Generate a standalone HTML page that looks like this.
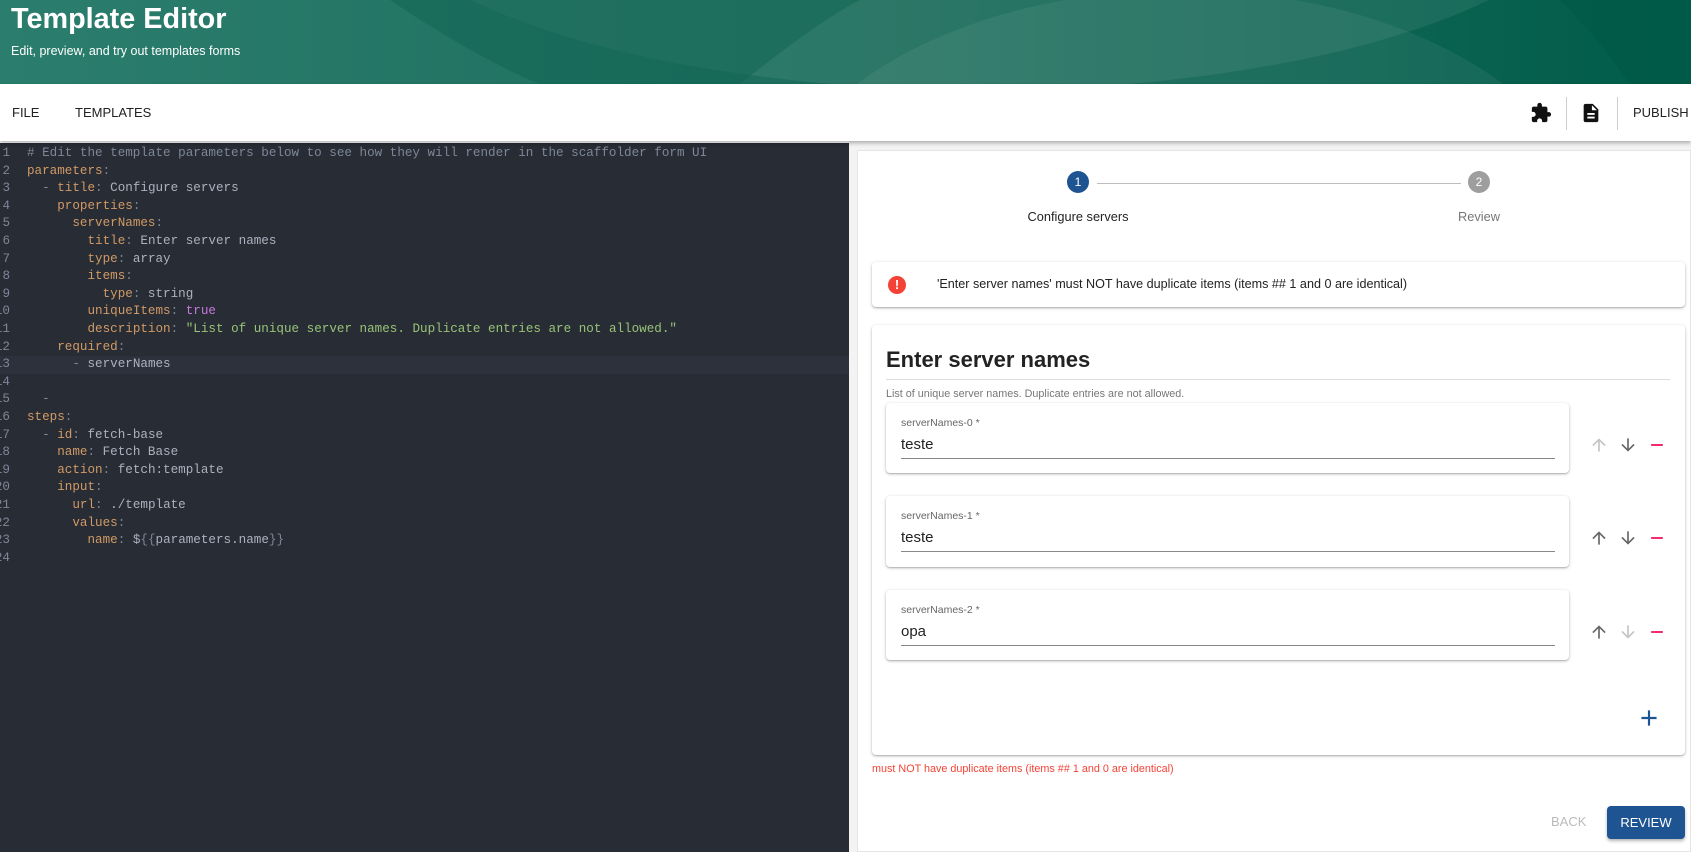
<!DOCTYPE html>
<html><head><meta charset="utf-8"><style>
*{box-sizing:border-box;margin:0;padding:0}
body{width:1691px;height:852px;overflow:hidden;font-family:"Liberation Sans",sans-serif;background:#fff;position:relative}
.hdr{position:absolute;left:0;top:0;width:1691px;height:84px;background:#1f6e5e;overflow:hidden}
.hdr h1{position:absolute;left:11px;top:3px;color:#fff;font-size:28.8px;font-weight:bold}
.hdr p{position:absolute;left:11px;top:44px;color:#fff;font-size:12.5px}
.bar{position:absolute;left:0;top:84px;width:1691px;height:57px;background:#fff;box-shadow:0 2px 4px rgba(0,0,0,.3);z-index:2}
.bar span{position:absolute;top:21px;font-size:13px;color:#222}
.vd{position:absolute;top:13px;width:1px;height:33px;background:#ccc}
.ed{position:absolute;left:0;top:143px;width:849px;height:709px;background:#282c34;font-family:"Liberation Mono",monospace;font-size:12.6px;color:#abb2bf}
.ln{position:absolute;left:0;width:849px;height:17.6px;line-height:17.6px;white-space:pre}
.ln .n{position:absolute;right:839px;color:#7d8799;text-align:right}
.ln .c{position:absolute;left:27px}
.k{color:#d19a66}.s{color:#98c379}.t{color:#c678dd}.cm{color:#7d8799}.p{color:#7d8799}
.rp{position:absolute;left:849px;top:141px;width:842px;height:711px;background:#f3f3f3}
.wc{position:absolute;left:857px;top:150px;width:834px;height:702px;background:#fff;border:1px solid #e5e5e5}
.card{position:absolute;background:#fff;border-radius:4px;box-shadow:0 1px 3px rgba(0,0,0,.25),0 1px 1px rgba(0,0,0,.14)}
.circ{position:absolute;width:22px;height:22px;border-radius:50%;color:#fff;font-size:12px;text-align:center;line-height:22px}
.item .lb{position:absolute;left:15px;top:14px;font-size:10.5px;color:#666}
.item .v{position:absolute;left:15px;top:33px;font-size:15px;color:#222}
.item .u{position:absolute;left:15px;right:14px;top:55px;height:1px;background:#888}
.ic{position:absolute;width:20px;height:20px}
</style></head><body>
<div class="hdr">
<svg width="1691" height="84" style="position:absolute;left:0;top:0">
<defs><linearGradient id="g" x1="0" x2="1"><stop offset="0" stop-color="#2b7d6d"/><stop offset="0.55" stop-color="#1b6c5b"/><stop offset="1" stop-color="#015c4a"/></linearGradient></defs>
<rect width="1691" height="84" fill="url(#g)"/>
<ellipse cx="980" cy="-120" rx="620" ry="210" fill="#fff" opacity="0.07"/>
<ellipse cx="1180" cy="250" rx="420" ry="260" fill="#fff" opacity="0.06"/>
<path d="M390 0 Q480 60 540 84 L740 84 Q820 20 860 0Z" fill="#0f6352" opacity="0.5"/>
<path d="M1580 0 L1691 0 L1691 84 L1630 84 Q1600 40 1560 0Z" fill="#005846" opacity="0.6"/>
</svg>
<h1>Template Editor</h1><p>Edit, preview, and try out templates forms</p></div>
<div class="bar"><span style="left:12px">FILE</span><span style="left:75px">TEMPLATES</span>
<svg style="position:absolute;left:1530px;top:18px" width="22" height="22" viewBox="0 0 24 24"><path fill="#111" d="M20.5 11H19V7c0-1.1-.9-2-2-2h-4V3.5C13 2.12 11.880 1 10.5 1S8 2.12 8 3.5V5H4c-1.1 0-1.99.9-1.990 2v3.8H3.5c1.49 0 2.7 1.21 2.7 2.7s-1.21 2.7-2.7 2.7H2V20c0 1.1.9 2 2 2h3.8v-1.5c0-1.49 1.21-2.7 2.7-2.7 1.49 0 2.7 1.21 2.7 2.7V22H17c1.1 0 2-.9 2-2v-4h1.5c1.38 0 2.5-1.12 2.5-2.5S21.88 11 20.5 11z"/></svg>
<div class="vd" style="left:1566px"></div>
<svg style="position:absolute;left:1580px;top:18px" width="22" height="22" viewBox="0 0 24 24"><path fill="#111" d="M14 2H6c-1.1 0-2 .9-2 2v16c0 1.1.9 2 2 2h12c1.1 0 2-.9 2-2V8l-6-6zm2 16H8v-2h8v2zm0-4H8v-2h8v2zm-3-5V3.5L18.5 9H13z"/></svg>
<div class="vd" style="left:1617px"></div>
<span style="left:1633px">PUBLISH</span></div>

<div class="ed">
<div class="ln" style="background:#2c313c;top:213.2px"></div>
</div>
<div class="ed" style="background:transparent;z-index:1">
<div class="ln" style="top:2px"><span class="n">1</span><span class="c cm"># Edit the template parameters below to see how they will render in the scaffolder form UI</span></div>
<div class="ln" style="top:19.6px"><span class="n">2</span><span class="c"><span class="k">parameters</span><span class="p">:</span></span></div>
<div class="ln" style="top:37.2px"><span class="n">3</span><span class="c">  <span class="p">-</span> <span class="k">title</span><span class="p">:</span> Configure servers</span></div>
<div class="ln" style="top:54.8px"><span class="n">4</span><span class="c">    <span class="k">properties</span><span class="p">:</span></span></div>
<div class="ln" style="top:72.4px"><span class="n">5</span><span class="c">      <span class="k">serverNames</span><span class="p">:</span></span></div>
<div class="ln" style="top:90px"><span class="n">6</span><span class="c">        <span class="k">title</span><span class="p">:</span> Enter server names</span></div>
<div class="ln" style="top:107.6px"><span class="n">7</span><span class="c">        <span class="k">type</span><span class="p">:</span> array</span></div>
<div class="ln" style="top:125.2px"><span class="n">8</span><span class="c">        <span class="k">items</span><span class="p">:</span></span></div>
<div class="ln" style="top:142.8px"><span class="n">9</span><span class="c">          <span class="k">type</span><span class="p">:</span> string</span></div>
<div class="ln" style="top:160.4px"><span class="n">10</span><span class="c">        <span class="k">uniqueItems</span><span class="p">:</span> <span class="t">true</span></span></div>
<div class="ln" style="top:178px"><span class="n">11</span><span class="c">        <span class="k">description</span><span class="p">:</span> <span class="s">"List of unique server names. Duplicate entries are not allowed."</span></span></div>
<div class="ln" style="top:195.6px"><span class="n">12</span><span class="c">    <span class="k">required</span><span class="p">:</span></span></div>
<div class="ln" style="top:213.2px"><span class="n">13</span><span class="c">      <span class="p">-</span> serverNames</span></div>
<div class="ln" style="top:230.8px"><span class="n">14</span></div>
<div class="ln" style="top:248.4px"><span class="n">15</span><span class="c">  <span class="p">-</span></span></div>
<div class="ln" style="top:266px"><span class="n">16</span><span class="c"><span class="k">steps</span><span class="p">:</span></span></div>
<div class="ln" style="top:283.6px"><span class="n">17</span><span class="c">  <span class="p">-</span> <span class="k">id</span><span class="p">:</span> fetch-base</span></div>
<div class="ln" style="top:301.2px"><span class="n">18</span><span class="c">    <span class="k">name</span><span class="p">:</span> Fetch Base</span></div>
<div class="ln" style="top:318.8px"><span class="n">19</span><span class="c">    <span class="k">action</span><span class="p">:</span> fetch:template</span></div>
<div class="ln" style="top:336.4px"><span class="n">20</span><span class="c">    <span class="k">input</span><span class="p">:</span></span></div>
<div class="ln" style="top:354px"><span class="n">21</span><span class="c">      <span class="k">url</span><span class="p">:</span> ./template</span></div>
<div class="ln" style="top:371.6px"><span class="n">22</span><span class="c">      <span class="k">values</span><span class="p">:</span></span></div>
<div class="ln" style="top:389.2px"><span class="n">23</span><span class="c">        <span class="k">name</span><span class="p">:</span> $<span class="p">{{</span>parameters.name<span class="p">}}</span></span></div>
<div class="ln" style="top:406.8px"><span class="n">24</span></div>
</div>

<div class="rp"></div>
<div class="wc"></div>
<div class="circ" style="left:1067px;top:171px;background:#1f5493">1</div>
<div style="position:absolute;left:1097px;top:183px;width:364px;height:1px;background:#bdbdbd"></div>
<div class="circ" style="left:1468px;top:171px;background:#9e9e9e">2</div>
<div style="position:absolute;left:978px;width:200px;text-align:center;top:209px;font-size:12.8px;color:#222">Configure servers</div>
<div style="position:absolute;left:1379px;width:200px;text-align:center;top:209px;font-size:12.8px;color:#777">Review</div>

<div class="card" style="left:872px;top:262px;width:813px;height:45px">
<div style="position:absolute;left:16px;top:14px;width:18px;height:18px;border-radius:50%;background:#f44336;color:#fff;font-weight:bold;font-size:13px;text-align:center;line-height:18px">!</div>
<div style="position:absolute;left:65px;top:15px;font-size:12.6px;color:#222">'Enter server names' must NOT have duplicate items (items ## 1 and 0 are identical)</div></div>

<div class="card" style="left:872px;top:325px;width:813px;height:430px">
<div style="position:absolute;left:14px;top:22px;font-size:22px;font-weight:bold;color:#222">Enter server names</div>
<div style="position:absolute;left:14px;top:54px;width:784px;height:1px;background:#ddd"></div>
<div style="position:absolute;left:14px;top:63px;font-size:10.8px;color:#777">List of unique server names. Duplicate entries are not allowed.</div>
</div>

<div class="card item" style="left:886px;top:403px;width:683px;height:70px"><div class="lb">serverNames-0 *</div><div class="v">teste</div><div class="u"></div></div>
<div class="card item" style="left:886px;top:496px;width:683px;height:71px"><div class="lb">serverNames-1 *</div><div class="v">teste</div><div class="u"></div></div>
<div class="card item" style="left:886px;top:590px;width:683px;height:70px"><div class="lb">serverNames-2 *</div><div class="v">opa</div><div class="u"></div></div>

<svg width="0" height="0" style="position:absolute"><defs>
<path id="up" d="M4 12l1.41 1.41L11 7.83V20h2V7.83l5.58 5.59L20 12l-8-8-8 8z"/>
<path id="dn" d="M20 12l-1.41-1.41L13 16.17V4h-2v12.17l-5.58-5.59L4 12l8 8 8-8z"/>
<path id="mn" d="M19 13H5v-2h14v2z"/></defs></svg>
<svg class="ic" style="left:1589px;top:435px" viewBox="0 0 24 24"><use href="#up" fill="#c4c4c4"/></svg>
<svg class="ic" style="left:1618px;top:435px" viewBox="0 0 24 24"><use href="#dn" fill="#666"/></svg>
<svg class="ic" style="left:1647px;top:435px" viewBox="0 0 24 24"><use href="#mn" fill="#f50057"/></svg>
<svg class="ic" style="left:1589px;top:528px" viewBox="0 0 24 24"><use href="#up" fill="#666"/></svg>
<svg class="ic" style="left:1618px;top:528px" viewBox="0 0 24 24"><use href="#dn" fill="#666"/></svg>
<svg class="ic" style="left:1647px;top:528px" viewBox="0 0 24 24"><use href="#mn" fill="#f50057"/></svg>
<svg class="ic" style="left:1589px;top:622px" viewBox="0 0 24 24"><use href="#up" fill="#666"/></svg>
<svg class="ic" style="left:1618px;top:622px" viewBox="0 0 24 24"><use href="#dn" fill="#c4c4c4"/></svg>
<svg class="ic" style="left:1647px;top:622px" viewBox="0 0 24 24"><use href="#mn" fill="#f50057"/></svg>
<svg style="position:absolute;left:1636px;top:705px" width="26" height="26" viewBox="0 0 24 24"><path fill="#1f5493" d="M19 13h-6v6h-2v-6H5v-2h6V5h2v6h6v2z"/></svg>

<div style="position:absolute;left:872px;top:763px;font-size:10.8px;color:#f44336">must NOT have duplicate items (items ## 1 and 0 are identical)</div>
<div style="position:absolute;left:1551px;top:814px;font-size:13px;color:#bbb">BACK</div>
<div style="position:absolute;left:1607px;top:806px;width:78px;height:33px;background:#1f5493;border-radius:4px;box-shadow:0 2px 3px rgba(0,0,0,.3);color:#fff;font-size:13px;text-align:center;line-height:33px">REVIEW</div>
</body></html>
